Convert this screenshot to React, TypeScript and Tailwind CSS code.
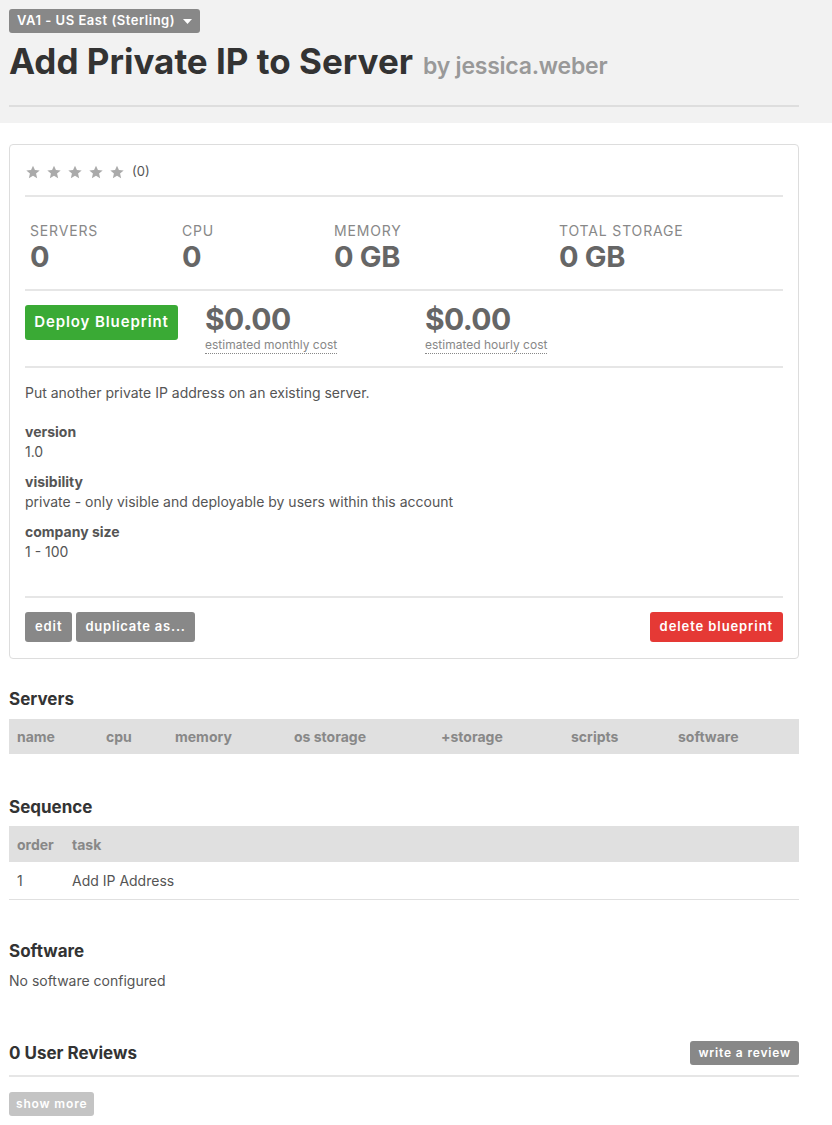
import React from "react";

const font = { fontFamily: "Inter, 'Noto Sans', sans-serif" };

function Star() {
  return (
    <svg width="16" height="16" viewBox="0 0 24 24" className="fill-[#aaaaaa]">
      <path d="M12 2.5l2.9 6.6 7.1.6-5.4 4.7 1.6 7-6.2-3.7-6.2 3.7 1.6-7L2 9.7l7.1-.6z" />
    </svg>
  );
}

function Stat({ label, value, w }: { label: string; value: string; w: string }) {
  return (
    <div className={`flex flex-col ${w}`}>
      <span className="text-[14px] leading-[18px] tracking-[0.06em] text-[#888]">{label}</span>
      <span className="mt-[2px] text-[29px] leading-[30px] font-bold text-[#666] tracking-[-0.01em]">{value}</span>
    </div>
  );
}

export default function App() {
  return (
    <div style={font} className="min-h-[1125px] bg-white text-[#444]">
      <div className="bg-[#f2f2f2] px-[9px] pt-[9px] pb-[16px]">
        <button className="flex items-center gap-[6px] h-[24px] px-[8px] rounded-[3px] bg-[#888] text-white text-[13px] font-semibold tracking-[0.04em]">
          VA1 - US East (Sterling)
          <svg width="9" height="5" viewBox="0 0 9 5" className="fill-white ml-[2px]"><path d="M0 0h9L4.5 5z" /></svg>
        </button>
        <div className="flex items-baseline gap-[10px] mt-[6px] h-[44px]">
          <h1 className="text-[35px] leading-[44px] font-bold text-[#333] tracking-[0px]">Add Private IP to Server</h1>
          <span className="text-[23px] font-semibold text-[#999] tracking-[-0.01em]">by jessica.weber</span>
        </div>
        <div className="border-t-2 border-[#dedede] w-[790px] mt-[22px]" />
      </div>

      <div className="px-[9px] pt-[21px]">
        <div className="w-[790px] border border-[#ddd] rounded-[4px] px-[15px] pt-[15px] pb-[16px]">
          <div className="flex items-center gap-[5px] h-[26px] pb-[2px]">
            <Star /><Star /><Star /><Star /><Star />
            <span className="text-[13px] text-[#555] ml-[2px]">(0)</span>
          </div>
          <div className="border-t-2 border-[#e6e6e6] mt-[9px]" />
          <div className="flex pl-[5px] pt-[25px] pb-[17px]">
            <Stat label="SERVERS" value="0" w="w-[152px]" />
            <Stat label="CPU" value="0" w="w-[152px]" />
            <Stat label="MEMORY" value="0 GB" w="w-[225px]" />
            <Stat label="TOTAL STORAGE" value="0 GB" w="w-[200px]" />
          </div>
          <div className="border-t-2 border-[#e6e6e6]" />
          <div className="flex pt-[13px] pb-[12px]">
            <button className="h-[35px] w-[153px] rounded-[3px] bg-[#3aaa35] text-white text-[15px] font-semibold tracking-[0.06em] mt-[1px]">Deploy Blueprint</button>
            <div className="flex flex-col ml-[27px] w-[220px]">
              <span className="text-[30px] leading-[30px] font-bold text-[#666] tracking-[-0.02em]">$0.00</span>
              <span className="text-[12px] leading-[16px] text-[#888] border-b border-dotted border-[#888] self-start mt-[3px]">estimated monthly cost</span>
            </div>
            <div className="flex flex-col">
              <span className="text-[30px] leading-[30px] font-bold text-[#666] tracking-[-0.02em]">$0.00</span>
              <span className="text-[12px] leading-[16px] text-[#888] border-b border-dotted border-[#888] self-start mt-[3px]">estimated hourly cost</span>
            </div>
          </div>
          <div className="border-t-2 border-[#e6e6e6]" />
          <div className="pt-[15px] text-[14px] leading-[20px] text-[#555]">
            <p>Put another private IP address on an existing server.</p>
            <div className="mt-[19px] font-bold">version</div>
            <div>1.0</div>
            <div className="mt-[10px] font-bold">visibility</div>
            <div>private - only visible and deployable by users within this account</div>
            <div className="mt-[10px] font-bold">company size</div>
            <div>1 - 100</div>
          </div>
          <div className="border-t-2 border-[#e6e6e6] mt-[34px]" />
          <div className="flex items-center pt-[14px]">
            <button className="h-[30px] px-[10px] rounded-[3px] bg-[#888] text-white text-[13px] font-semibold tracking-[0.07em]">edit</button>
            <button className="h-[30px] px-[9px] ml-[4px] rounded-[3px] bg-[#888] text-white text-[13px] font-semibold tracking-[0.06em]">duplicate as...</button>
            <button className="ml-auto h-[30px] px-[10px] rounded-[3px] bg-[#e53935] text-white text-[13px] font-semibold tracking-[0.07em]">delete blueprint</button>
          </div>
        </div>

        <h2 className="mt-[29px] text-[17px] leading-[22px] font-bold text-[#333]">Servers</h2>
        <div className="w-[790px] mt-[9px] h-[35px] bg-[#e0e0e0] flex items-center text-[14px] font-bold text-[#888] pl-[8px]">
          <span className="w-[89px]">name</span>
          <span className="w-[69px]">cpu</span>
          <span className="w-[119px]">memory</span>
          <span className="w-[147px]">os storage</span>
          <span className="w-[130px]">+storage</span>
          <span className="w-[107px]">scripts</span>
          <span>software</span>
        </div>

        <h2 className="mt-[42px] text-[17px] leading-[22px] font-bold text-[#333]">Sequence</h2>
        <div className="w-[790px] mt-[8px]">
          <div className="h-[36px] bg-[#e0e0e0] flex items-center text-[14px] font-bold text-[#888] pl-[8px]">
            <span className="w-[55px]">order</span>
            <span>task</span>
          </div>
          <div className="h-[38px] flex items-center text-[14px] text-[#555] pl-[8px] border-b border-[#e0e0e0]">
            <span className="w-[55px]">1</span>
            <span>Add IP Address</span>
          </div>
        </div>

        <h2 className="mt-[40px] text-[17px] leading-[22px] font-bold text-[#333]">Software</h2>
        <p className="mt-[9px] text-[14px] leading-[20px] text-[#555]">No software configured</p>

        <div className="w-[790px] mt-[50px] flex items-center justify-between">
          <h2 className="text-[17px] leading-[22px] font-bold text-[#333]">0 User Reviews</h2>
          <button className="h-[24px] px-[8px] rounded-[3px] bg-[#888] text-white text-[12px] font-semibold tracking-[0.07em]">write a review</button>
        </div>
        <div className="w-[790px] border-t-2 border-[#e6e6e6] mt-[10px]" />
        <button className="mt-[15px] h-[24px] px-[7px] rounded-[3px] bg-[#c4c4c4] text-white text-[12px] font-semibold tracking-[0.07em]">show more</button>
      </div>
    </div>
  );
}
